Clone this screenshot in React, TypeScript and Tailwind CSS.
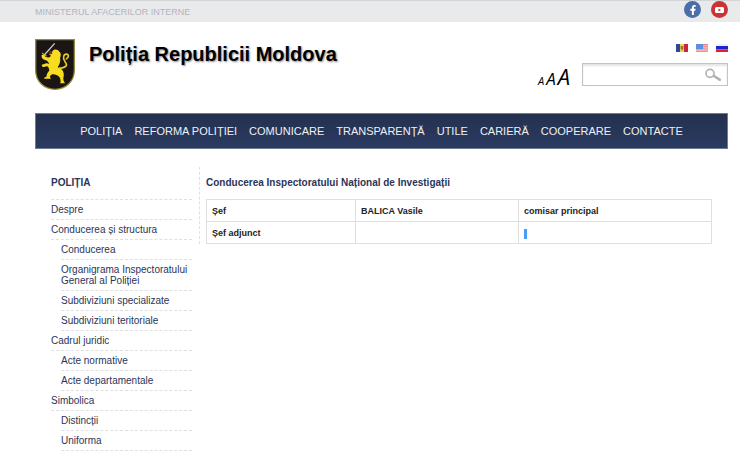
import { FaFacebookF } from "react-icons/fa";

const navItems = [
  "POLIȚIA",
  "REFORMA POLIȚIEI",
  "COMUNICARE",
  "TRANSPARENȚĂ",
  "UTILE",
  "CARIERĂ",
  "COOPERARE",
  "CONTACTE",
];

const sideItems = [
  { label: "Despre", sub: false },
  { label: "Conducerea și structura", sub: false },
  { label: "Conducerea", sub: true },
  { label: "Organigrama Inspectoratului General al Poliției", sub: true },
  { label: "Subdiviziuni specializate", sub: true },
  { label: "Subdiviziuni teritoriale", sub: true },
  { label: "Cadrul juridic", sub: false },
  { label: "Acte normative", sub: true },
  { label: "Acte departamentale", sub: true },
  { label: "Simbolica", sub: false },
  { label: "Distincții", sub: true },
  { label: "Uniforma", sub: true },
];

function Crest() {
  return (
    <svg viewBox="0 0 120 153" className="h-[51px] w-10 shrink-0" aria-hidden="true">
      <path d="M2 2H118V94C118 128 92 151 60 151S2 128 2 94Z" fill="#1b1614" stroke="#8f8b3c" strokeWidth="4" />
      <path
        d="M53 36C58 29 69 31 73 38C79 42 78 51 75 57C78 66 73 77 68 85C78 89 85 94 86 103C88 111 83 117 86 126L90 133H75L77 128C76 119 75 113 66 109C60 106 54 104 49 107C44 110 44 115 48 119H29C25 117 29 113 34 114C35 107 37 100 43 95C42 89 41 84 37 82C32 82 29 86 22 83L20 77L28 75C33 72 38 73 42 75C41 69 37 65 30 63C23 61 18 56 20 48L28 46L31 53C37 56 43 56 46 53L47 48H42L48 43Z"
        fill="#f7dc1f"
      />
      <path d="M72 87C83 88 97 83 94 75C92 68 83 64 86 53C88 43 101 43 100 52C100 58 93 57 94 62" fill="none" stroke="#e5cc2b" strokeWidth="5" />
      <path d="M28 48L59 13" stroke="#c9c9cb" strokeWidth="4" />
      <path d="M21 42L35 51" stroke="#e5cc2b" strokeWidth="3" />
      <circle cx="47" cy="41" r="5" fill="#8b251c" />
    </svg>
  );
}

function MoldovaFlag() {
  return (
    <svg viewBox="0 0 12 8" className="h-2 w-3" aria-hidden="true">
      <path d="M0 0H4V8H0Z" fill="#254d9c" />
      <path d="M4 0H8V8H4Z" fill="#f2d33b" />
      <path d="M8 0H12V8H8Z" fill="#c7283c" />
      <path d="M4.7 2H7.3V4.5L6 6.5L4.7 4.5Z" fill="#99713a" />
    </svg>
  );
}

function UsaFlag() {
  return (
    <svg viewBox="0 0 12 8" className="h-2 w-3" aria-hidden="true">
      <path d="M0 0H12V8H0Z" fill="#f3c6c8" />
      <path d="M0 .6H12M0 2.8H12M0 5H12M0 7.2H12" stroke="#e98484" strokeWidth="1.1" />
      <path d="M0 0H7V5H0Z" fill="#5f8fdc" />
    </svg>
  );
}

function RussiaFlag() {
  return (
    <svg viewBox="0 0 12 8" className="h-2 w-3" aria-hidden="true">
      <path d="M0 0H12V3H0Z" fill="#f1f1f4" />
      <path d="M0 2H12V5.5H0Z" fill="#1c25d0" />
      <path d="M0 5.5H12V8H0Z" fill="#e5202c" />
    </svg>
  );
}

export default function App() {
  return (
    <div className="bg-white font-['Liberation_Sans',Arial,sans-serif] text-[#2b3557]">
      <div className="flex h-[22px] items-center justify-between border-t border-[#d4d5d7] bg-[#e9eaec] pr-3 pl-[35px]">
        <a href="#mai" className="text-[9px] leading-3 text-[#b2b4c0]">
          MINISTERUL AFACERILOR INTERNE
        </a>
        <div className="mb-1 flex gap-2.5">
          <a href="#facebook" aria-label="Facebook" className="flex size-[17px] items-center justify-center rounded-full bg-[#4a6ea9] text-white">
            <FaFacebookF className="size-2.5" />
          </a>
          <a href="#youtube" aria-label="YouTube" className="flex size-[17px] items-center justify-center rounded-full bg-[#cc3433]">
            <svg viewBox="0 0 18 12" className="h-[6px] w-[9px]" aria-hidden="true">
              <rect width="18" height="12" rx="3" fill="#fff" />
              <path d="M7 3L12 6L7 9Z" fill="#cc3433" />
            </svg>
          </a>
        </div>
      </div>

      <header className="flex justify-between pr-3 pb-[23px] pl-[35px]">
        <div className="flex gap-3.5 pt-[17px]">
          <Crest />
          <h1 className="text-[20px] leading-[30px] font-bold text-black [text-shadow:1px_1px_2px_#888]">
            Poliția Republicii Moldova
          </h1>
        </div>
        <div className="flex flex-col items-end gap-[11px] pt-[22px]">
          <div className="flex gap-2">
            <a href="#ro" aria-label="Română"><MoldovaFlag /></a>
            <a href="#en" aria-label="English"><UsaFlag /></a>
            <a href="#ru" aria-label="Русский"><RussiaFlag /></a>
          </div>
          <div className="flex h-[23px] items-start gap-3">
            <div className="flex items-baseline gap-0.5 pt-[3px] font-['Open_Sans','Noto_Sans',sans-serif] leading-5 text-black italic">
              <button type="button" aria-label="Text mic" className="text-[11px]">A</button>
              <button type="button" aria-label="Text mediu" className="text-[17px]">A</button>
              <button type="button" aria-label="Text mare" className="text-[22px]">A</button>
            </div>
            <form className="flex h-[23px] w-[146px] items-center border border-[#c3c3c3] pr-1.5 shadow-[inset_0_2px_2px_#e4e4e4]">
              <input type="text" aria-label="Căutare" className="h-full min-w-0 flex-1 bg-transparent px-1.5 text-[10px] outline-none" />
              <button type="button" aria-label="Caută">
                <svg viewBox="0 0 48 39" className="h-[13px] w-4" fill="none" stroke="#b3b3b3" aria-hidden="true">
                  <circle cx="15" cy="16" r="12" strokeWidth="5" />
                  <path d="M27 24L44 35" strokeWidth="8" strokeLinecap="round" />
                </svg>
              </button>
            </form>
          </div>
        </div>
      </header>

      <nav className="mr-3 ml-[35px] flex h-9 items-center justify-center gap-3 border border-[#6f7a93] bg-linear-to-b from-[#24304f] to-[#2a3b61] text-[11px] whitespace-nowrap text-[#eef0f5]">
        {navItems.map((item) => (
          <a key={item} href="#">{item}</a>
        ))}
      </nav>

      <div className="flex items-start pt-[18px] pr-7 pl-[51px]">
        <aside className="w-[141px] shrink-0">
          <h2 className="border-b border-dashed border-[#e0e0e0] pt-2 pb-2 text-[10px] leading-4 font-bold">POLIȚIA</h2>
          <ul className="text-[10px] leading-[11px]">
            {sideItems.map((item) => (
              <li
                key={item.label}
                className={
                  item.sub
                    ? "ml-2.5 border-b border-dashed border-[#e0e0e0] py-1"
                    : "border-b border-dashed border-[#e0e0e0] py-1"
                }
              >
                <a href="#" className="block">{item.label}</a>
              </li>
            ))}
          </ul>
        </aside>

        <main className="ml-[7px] min-w-0 flex-1 border-l border-dashed border-[#e0e0e0] pl-1.5">
          <h2 className="pt-2 pb-2 text-[10px] leading-4 font-bold">
            Conducerea Inspectoratului Național de Investigații
          </h2>
          <table className="w-full table-fixed border-collapse text-left text-[9px] leading-[11px] font-bold text-[#222]">
            <colgroup>
              <col className="w-[149px]" />
              <col className="w-[163px]" />
              <col />
            </colgroup>
            <tbody>
              <tr className="h-[22px]">
                <td className="border border-[#dfdfdf] px-[5px] pt-1 pb-0.5">Șef</td>
                <td className="border border-[#dfdfdf] px-[5px] pt-1 pb-0.5">BALICA Vasile</td>
                <td className="border border-[#dfdfdf] px-[5px] pt-1 pb-0.5">comisar principal</td>
              </tr>
              <tr className="h-[22px]">
                <td className="border border-[#dfdfdf] px-[5px] pt-1 pb-0.5">Șef adjunct</td>
                <td className="border border-[#dfdfdf] px-[5px] pt-1 pb-0.5"></td>
                <td className="border border-[#dfdfdf] px-[5px] pt-1 pb-0.5">
                  <div className="h-2.5 w-[3px] bg-[#479ff8]" />
                </td>
              </tr>
            </tbody>
          </table>
        </main>
      </div>
    </div>
  );
}
